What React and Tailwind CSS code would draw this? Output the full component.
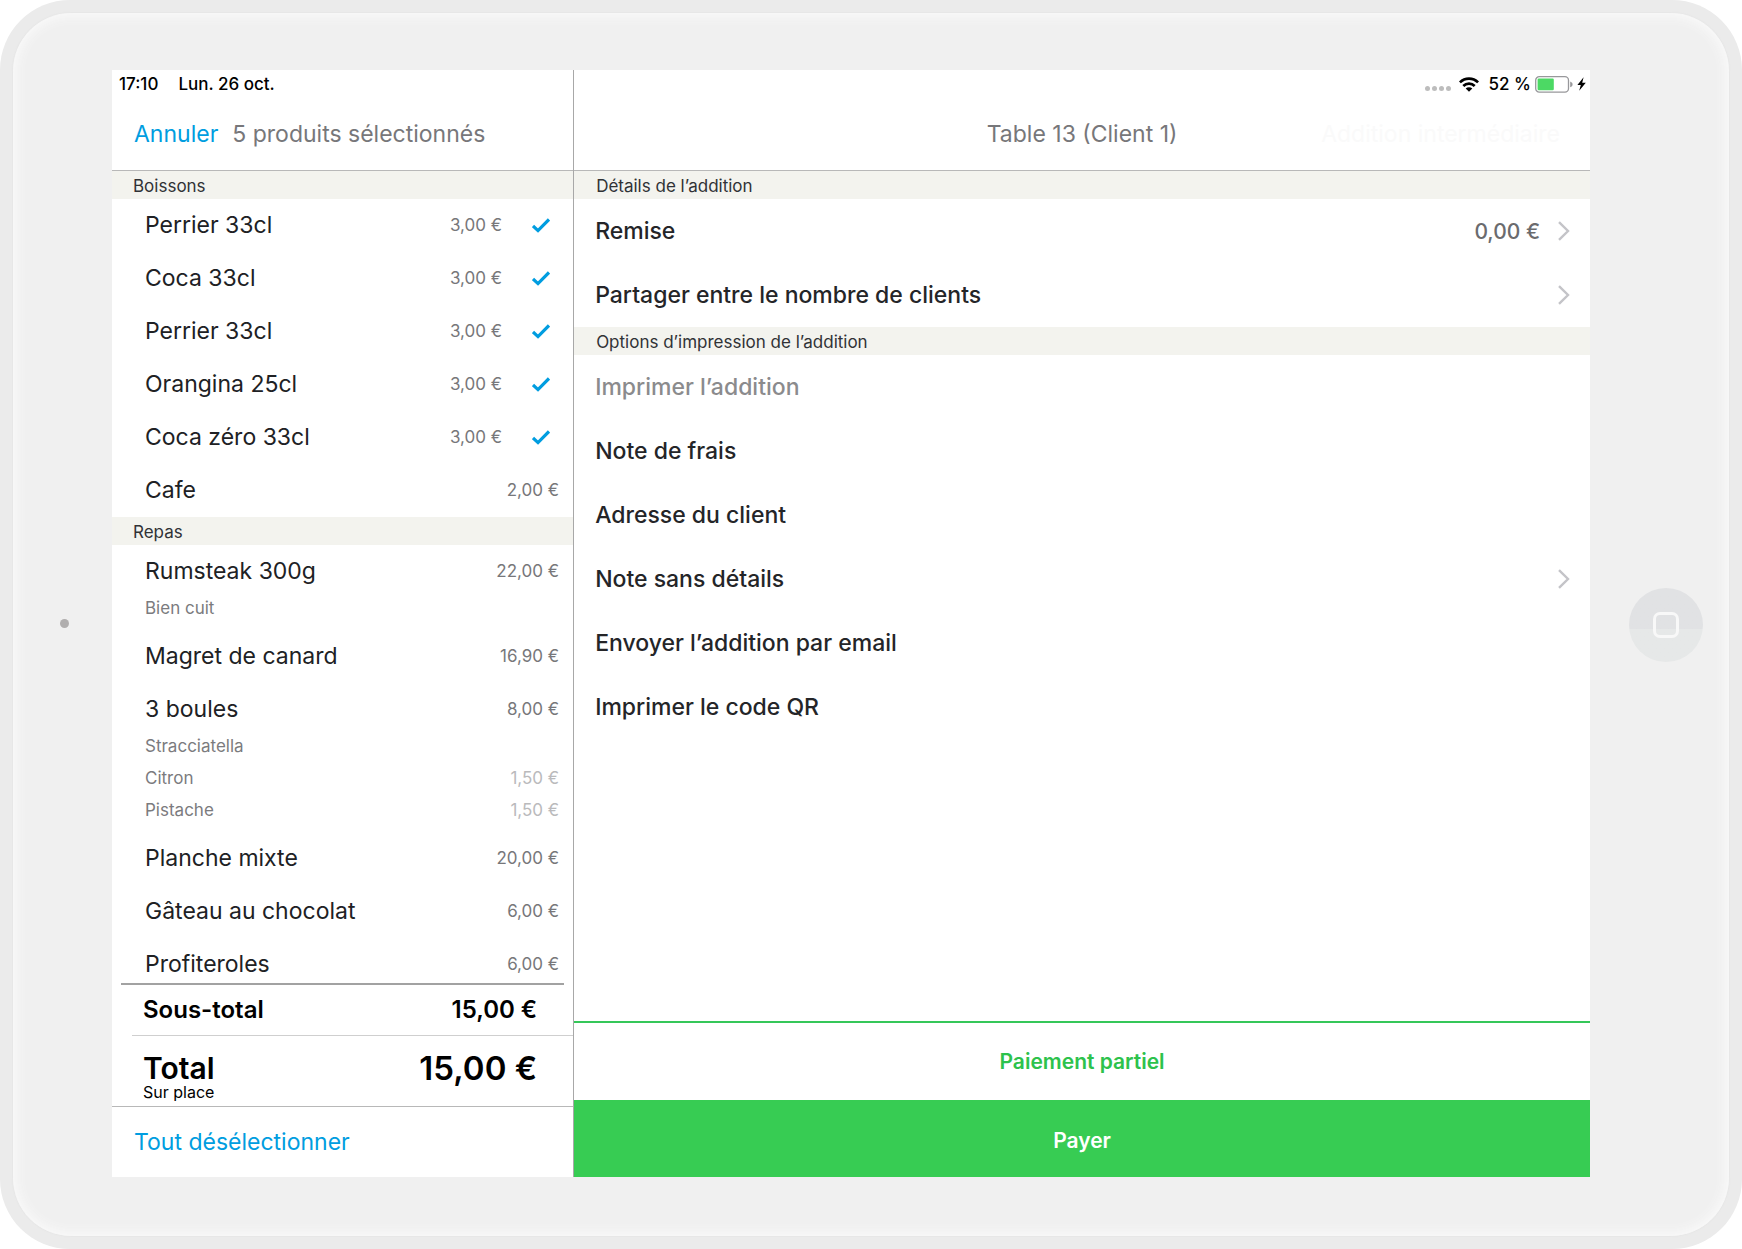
import { useState } from "react";

const SECTIONS = [
  {
    title: "Boissons",
    items: [
      { id: 1, name: "Perrier 33cl", price: "3,00 €" },
      { id: 2, name: "Coca 33cl", price: "3,00 €" },
      { id: 3, name: "Perrier 33cl", price: "3,00 €" },
      { id: 4, name: "Orangina 25cl", price: "3,00 €" },
      { id: 5, name: "Coca zéro 33cl", price: "3,00 €" },
      { id: 6, name: "Cafe", price: "2,00 €" },
    ],
  },
  {
    title: "Repas",
    items: [
      { id: 7, name: "Rumsteak 300g", price: "22,00 €", extras: [{ name: "Bien cuit" }] },
      { id: 8, name: "Magret de canard", price: "16,90 €" },
      {
        id: 9,
        name: "3 boules",
        price: "8,00 €",
        extras: [
          { name: "Stracciatella" },
          { name: "Citron", price: "1,50 €" },
          { name: "Pistache", price: "1,50 €" },
        ],
      },
      { id: 10, name: "Planche mixte", price: "20,00 €" },
      { id: 11, name: "Gâteau au chocolat", price: "6,00 €" },
      { id: 12, name: "Profiteroles", price: "6,00 €", compact: true },
    ],
  },
];

const DETAILS = [
  { label: "Remise", value: "0,00 €", more: true },
  { label: "Partager entre le nombre de clients", more: true },
];

const PRINT_OPTIONS = [
  { label: "Imprimer l’addition", disabled: true },
  { label: "Note de frais" },
  { label: "Adresse du client" },
  { label: "Note sans détails", more: true },
  { label: "Envoyer l’addition par email" },
  { label: "Imprimer le code QR" },
];

function CheckIcon() {
  return (
    <svg viewBox="0 0 18 15" className="h-[15px] w-[18px]" fill="none" stroke="#009de0" strokeWidth="3.2" aria-hidden="true">
      <path d="M1 8 6 12.6 17 1.4" />
    </svg>
  );
}

function ChevronIcon() {
  return (
    <svg viewBox="0 0 12 20" className="h-5 w-3" fill="none" stroke="#c4c4c8" strokeWidth="2.4" aria-hidden="true">
      <path d="M1 1.2 10 10 1 18.8" />
    </svg>
  );
}

function WifiIcon() {
  return (
    <svg viewBox="0 0 20 15" className="h-[15px] w-5" fill="none" stroke="#000" strokeWidth="2.7" aria-hidden="true">
      <path d="M0.9 5.4a12.9 12.9 0 0 1 18.2 0" />
      <path d="M4.3 9a8.1 8.1 0 0 1 11.4 0" />
      <path d="M10 14.8 6.7 11.6a4.6 4.6 0 0 1 6.6 0Z" fill="#000" stroke="none" />
    </svg>
  );
}

function BatteryIcon() {
  return (
    <svg viewBox="0 0 38 17" className="h-[17px] w-[38px]" aria-hidden="true">
      <rect x="0.7" y="0.7" width="32.8" height="15.4" rx="3.6" fill="#fff" stroke="#98989b" strokeWidth="1.3" />
      <rect x="2.6" y="2.6" width="16.2" height="11.6" rx="1.2" fill="#4cd964" />
      <path d="M35.2 5.6c1.8.8 2.4 1.8 2.4 2.8s-.6 2-2.4 2.8Z" fill="#98989b" />
    </svg>
  );
}

function BoltIcon() {
  return (
    <svg viewBox="0 0 9 14" className="h-3.5 w-[9px]" aria-hidden="true">
      <path d="M6.6 0.2 0.4 8H3.8L2.2 13.8 8.8 5.8H5.2Z" fill="#000" />
    </svg>
  );
}

function SectionTitle({ className, children }) {
  return (
    <h2 className={`bg-[#f3f3ee] pt-0.5 text-[17px] leading-[26px] text-[#303236] ${className}`}>{children}</h2>
  );
}

function Product({ item, checked, onToggle }) {
  return (
    <li className="pr-3.5 pl-[33px]">
      <label className={`relative flex cursor-pointer items-center pt-3 ${item.compact ? "pb-1" : "pb-3"}`}>
        <input type="checkbox" className="peer sr-only" checked={checked} onChange={onToggle} />
        <span className="flex-1 text-[23px] leading-[29px] text-[#202124]">{item.name}</span>
        <span className="text-[17px] leading-[29px] text-[#77777a]">{item.price}</span>
        <span className="hidden pr-[9px] pl-[30px] peer-checked:block">
          <CheckIcon />
        </span>
      </label>
      {item.extras && (
        <ul className="-mt-1.5 pb-1.5 text-[17px] leading-8 text-[#7b7b7e]">
          {item.extras.map((extra) => (
            <li key={extra.name} className="flex justify-between">
              <span>{extra.name}</span>
              <span className="text-[#bababc]">{extra.price}</span>
            </li>
          ))}
        </ul>
      )}
    </li>
  );
}

function OptionRow({ option }) {
  return (
    <li>
      <button
        type="button"
        disabled={option.disabled}
        className="flex h-16 w-full items-center pr-5 pl-[21px] text-left text-[23px] font-medium text-[#242528] disabled:text-[#8b8b8d]"
      >
        <span className="flex-1">{option.label}</span>
        {option.value && <span className="mr-[18px] pt-0.5 text-[21px] text-[#6b6b6e]">{option.value}</span>}
        {option.more && <ChevronIcon />}
      </button>
    </li>
  );
}

export default function App() {
  const [selected, setSelected] = useState([1, 2, 3, 4, 5]);
  const toggle = (id) =>
    setSelected((ids) => (ids.includes(id) ? ids.filter((i) => i !== id) : [...ids, id]));

  return (
    <div className="bg-white font-[Inter,sans-serif] text-black">
      <div className="flex min-h-screen rounded-[70px] bg-[#ebebeb] p-[13px]">
        <div className="flex flex-1 rounded-[58px] bg-[#f0f0f0] pt-[57px] pb-[59px] shadow-[inset_0_0_12px_3px_#fafafa,0_0_2px_#dedede]">
          <div className="flex w-[99px] shrink-0 items-center justify-center pl-1">
            <span className="size-[9px] rounded-full bg-[#b0aeae]" />
          </div>

          <main className="flex min-w-0 flex-1 bg-white">
            <section className="flex w-[31.2%] flex-col" aria-label="Produits">
              <div className="flex h-7 items-center gap-5 pt-0.5 pl-[7px] text-[17px] font-medium">
                <time>17:10</time>
                <span>Lun. 26 oct.</span>
              </div>
              <header className="flex h-[73px] items-center gap-3.5 border-b border-[#b8b8b8] pl-[22px] text-[23px]">
                <button type="button" className="text-[#009de0]">Annuler</button>
                <h1 className="text-[#77777a]">{selected.length} produits sélectionnés</h1>
              </header>

              <div className="flex-1">
                {SECTIONS.map((section) => (
                  <div key={section.title}>
                    <SectionTitle className="pl-[21px]">{section.title}</SectionTitle>
                    <ul>
                      {section.items.map((item) => (
                        <Product
                          key={item.id}
                          item={item}
                          checked={selected.includes(item.id)}
                          onToggle={() => toggle(item.id)}
                        />
                      ))}
                    </ul>
                  </div>
                ))}
              </div>

              <div className="mx-[9px] border-t-2 border-[#a2a2a2]" />
              <div className="flex h-[50px] items-center justify-between pr-9 pl-[31px] text-[24px] font-semibold">
                <span>Sous-total</span>
                <span>15,00 €</span>
              </div>
              <div className="ml-5 border-t border-[#cfcfcf]" />
              <div className="flex justify-between border-b border-[#b8b8b8] pt-4 pr-9 pb-1.5 pl-[31px]">
                <div>
                  <p className="text-[30px] leading-8 font-semibold">Total</p>
                  <p className="text-[16px] leading-4">Sur place</p>
                </div>
                <p className="text-[33px] leading-8 font-semibold">15,00 €</p>
              </div>
              <div className="flex h-[70px] items-center pl-[22px]">
                <button type="button" onClick={() => setSelected([])} className="text-[23px] text-[#009de0]">
                  Tout désélectionner
                </button>
              </div>
            </section>

            <section className="flex min-w-0 flex-1 flex-col border-l border-[#a8a8a8]" aria-label="Addition">
              <div className="flex h-7 items-center justify-end pr-1 text-[17px] font-medium">
                <span className="mt-2 mr-2 flex gap-0.5" aria-hidden="true">
                  <span className="size-[5px] rounded-full bg-[#bdbdbd]" />
                  <span className="size-[5px] rounded-full bg-[#bdbdbd]" />
                  <span className="size-[5px] rounded-full bg-[#bdbdbd]" />
                  <span className="size-[5px] rounded-full bg-[#bdbdbd]" />
                </span>
                <WifiIcon />
                <span className="mr-1 ml-2.5 pt-0.5">52 %</span>
                <BatteryIcon />
                <span className="ml-1">
                  <BoltIcon />
                </span>
              </div>
              <header className="grid h-[73px] grid-cols-[1fr_auto_1fr] items-center border-b border-[#b8b8b8] px-[30px] text-[23px]">
                <h1 className="col-start-2 text-[#77777a]">Table 13 (Client 1)</h1>
                <button type="button" disabled className="justify-self-end text-[#fafafa]">
                  Addition intermédiaire
                </button>
              </header>

              <div className="flex-1">
                <SectionTitle className="pl-[22px]">Détails de l’addition</SectionTitle>
                <ul>
                  {DETAILS.map((option) => (
                    <OptionRow key={option.label} option={option} />
                  ))}
                </ul>
                <SectionTitle className="pl-[22px]">Options d’impression de l’addition</SectionTitle>
                <ul>
                  {PRINT_OPTIONS.map((option) => (
                    <OptionRow key={option.label} option={option} />
                  ))}
                </ul>
              </div>

              <button type="button" className="h-[79px] border-t-2 border-[#35c759] text-[21px] font-semibold text-[#2dc24c]">
                Paiement partiel
              </button>
              <button type="button" className="h-[77px] bg-[#37cc53] pt-1 text-[21px] font-semibold text-white">
                Payer
              </button>
            </section>
          </main>

          <div className="flex w-[139px] shrink-0 items-center justify-center pt-0.5 pl-3">
            <button
              type="button"
              aria-label="Accueil"
              className="flex size-[74px] items-center justify-center rounded-full bg-linear-to-b from-[#e1e2e4] from-55% to-[#e6e8e8] to-55%"
            >
              <span className="size-[26px] rounded-[7px] border-3 border-[#f8f8f8]" />
            </button>
          </div>
        </div>
      </div>
    </div>
  );
}
